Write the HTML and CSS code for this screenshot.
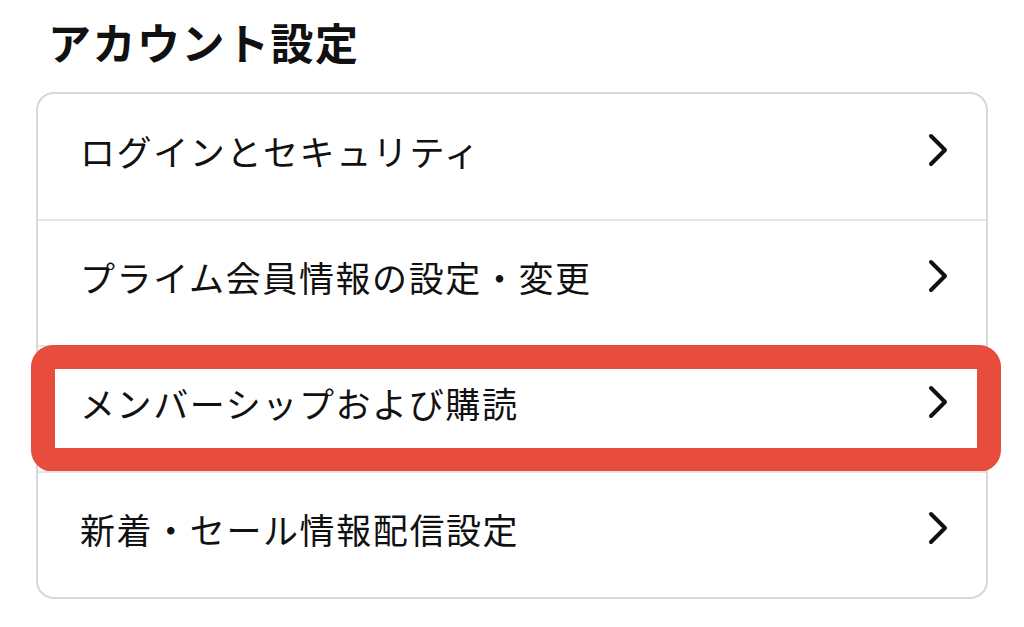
FILE: index.html
```html
<!DOCTYPE html>
<html lang="ja">
<head>
<meta charset="utf-8">
<link rel="stylesheet" href="styles.css">
</head>
<body>
<div class="page">
  <h1 class="title">アカウント設定</h1>
  <div class="card">
    <div class="row"><span class="label">ログインとセキュリティ</span><svg class="chev" viewBox="0 0 20 34"><polyline points="3,3 17,17 3,31"/></svg></div>
    <div class="row"><span class="label">プライム会員情報の設定・変更</span><svg class="chev" viewBox="0 0 20 34"><polyline points="3,3 17,17 3,31"/></svg></div>
    <div class="row highlighted"><span class="label">メンバーシップおよび購読</span><svg class="chev" viewBox="0 0 20 34"><polyline points="3,3 17,17 3,31"/></svg><div class="mark"></div></div>
    <div class="row"><span class="label">新着・セール情報配信設定</span><svg class="chev" viewBox="0 0 20 34"><polyline points="3,3 17,17 3,31"/></svg></div>
  </div>
</div>
</body>
</html>
```
FILE: styles.css
```css
html, body {
  margin: 0;
  padding: 0;
  background: #ffffff;
}
body {
  font-family: "Noto Sans CJK JP", "Noto Sans", sans-serif;
  color: #111111;
  width: 1024px;
  height: 627px;
  overflow: hidden;
}
.page {
  padding: 10px 36px 0 36px;
}
.title {
  margin: 0 0 20px 12px;
  font-size: 43px;
  font-weight: 700;
  line-height: 62px;
  letter-spacing: 1.5px;
}
.card {
  width: 948px;
  border: 2px solid #d5d9d9;
  border-radius: 18px;
}
.row {
  position: relative;
  height: 124px;
  display: flex;
  align-items: center;
  justify-content: space-between;
  padding: 0 38px 0 42px;
  border-top: 2px solid #e3e6e6;
}
.row:first-child {
  border-top: none;
  height: 125px;
}
.label {
  font-size: 35px;
  letter-spacing: 1.6px;
  line-height: 1;
  margin-bottom: 13px;
}
.chev {
  width: 20px;
  height: 34px;
  margin-bottom: 14px;
}
.chev polyline {
  fill: none;
  stroke: #111111;
  stroke-width: 4;
  stroke-linecap: round;
  stroke-linejoin: round;
}
.mark {
  position: absolute;
  left: -7px;
  right: -15px;
  top: -2px;
  bottom: -1px;
  border: 24px solid #e84c3d;
  border-radius: 22px;
  pointer-events: none;
}
```
